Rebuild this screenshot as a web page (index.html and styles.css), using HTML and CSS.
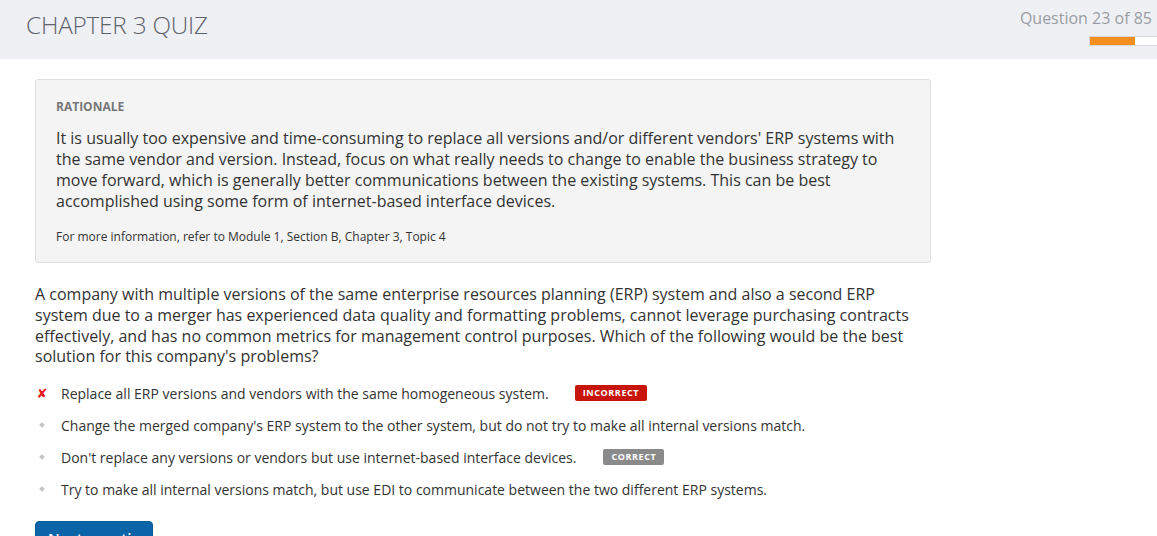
FILE: index.html
```html
<!DOCTYPE html>
<html>
<head>
<meta charset="utf-8">
<link rel="stylesheet" href="styles.css">
</head>
<body>
<header class="topbar">
  <h1 class="title">CHAPTER 3 QUIZ</h1>
  <div class="progress-wrap">
    <div class="qcount">Question 23 of 85</div>
    <div class="progress"><div class="progress-fill" style="width:67%"></div></div>
  </div>
</header>
<main class="content">
  <section class="rationale">
    <div class="rationale-label">RATIONALE</div>
    <p class="rationale-text">It is usually too expensive and time-consuming to replace all versions and/or different vendors' ERP systems with the same vendor and version. Instead, focus on what really needs to change to enable the business strategy to move forward, which is generally better communications between the existing systems. This can be best accomplished using some form of internet-based interface devices.</p>
    <p class="rationale-ref">For more information, refer to Module 1, Section B, Chapter 3, Topic 4</p>
  </section>
  <p class="question">A company with multiple versions of the same enterprise resources planning (ERP) system and also a second ERP system due to a merger has experienced data quality and formatting problems, cannot leverage purchasing contracts effectively, and has no common metrics for management control purposes. Which of the following would be the best solution for this company's problems?</p>
  <ul class="options">
    <li class="option"><span class="mark wrong">✘</span><span class="opt-text">Replace all ERP versions and vendors with the same homogeneous system.</span><span class="badge badge-incorrect">INCORRECT</span></li>
    <li class="option"><span class="mark"><span class="dot"></span></span><span class="opt-text">Change the merged company's ERP system to the other system, but do not try to make all internal versions match.</span></li>
    <li class="option"><span class="mark"><span class="dot"></span></span><span class="opt-text">Don't replace any versions or vendors but use internet-based interface devices.</span><span class="badge badge-correct">CORRECT</span></li>
    <li class="option"><span class="mark"><span class="dot"></span></span><span class="opt-text">Try to make all internal versions match, but use EDI to communicate between the two different ERP systems.</span></li>
  </ul>
  <button class="next-btn">Next question</button>
</main>
</body>
</html>
```
FILE: styles.css
```css
html, body {
  margin: 0;
  padding: 0;
  background: #ffffff;
  font-family: "Open Sans", "Liberation Sans", sans-serif;
  color: #333333;
  overflow: hidden;
  height: 536px;
}
.topbar {
  background: #eff0f4;
  height: 59px;
  display: flex;
  justify-content: space-between;
  align-items: flex-start;
  box-sizing: border-box;
}
.title {
  margin: 0;
  padding: 9px 0 0 26px;
  font-weight: 300;
  font-size: 24.3px;
  line-height: 32px;
  color: #5f636b;
  letter-spacing: -0.2px;
}
.progress-wrap {
  padding: 6px 5px 0 0;
  display: flex;
  flex-direction: column;
  align-items: flex-end;
}
.qcount {
  font-size: 16px;
  line-height: 24px;
  color: #9a9da3;
}
.progress {
  margin-top: 6px;
  margin-right: -5px;
  width: 67px;
  height: 8px;
  background: #ffffff;
  border: 1px solid #d8d8dc;
  border-right: none;
}
.progress-fill {
  height: 100%;
  background: #f48f1f;
}
.content {
  padding: 20px 0 0 35px;
  width: 896px;
}
.rationale {
  background: #f4f4f4;
  border: 1px solid #e1e1e1;
  border-radius: 3px;
  padding: 19px 20px 17px 20px;
}
.rationale-label {
  font-size: 12px;
  font-weight: 700;
  color: #777777;
  line-height: 16px;
}
.rationale-text {
  margin: 13px 0 0 0;
  font-size: 16px;
  line-height: 21px;
  color: #333333;
}
.rationale-ref {
  margin: 17px 0 0 0;
  font-size: 12px;
  line-height: 16px;
  color: #333333;
}
.question {
  margin: 21px 0 0 0;
  font-size: 16px;
  line-height: 20.75px;
  color: #333333;
}
.options {
  list-style: none;
  margin: 10px 0 0 0;
  padding: 0;
}
.option {
  display: flex;
  align-items: center;
  height: 32px;
  font-size: 14px;
  color: #333333;
}
.mark {
  width: 26px;
  margin-left: -6px;
  display: flex;
  justify-content: center;
  align-items: center;
  flex-shrink: 0;
}
.wrong {
  color: #e8161b;
  font-size: 13px;
  font-family: "DejaVu Sans", sans-serif;
}
.dot {
  width: 4px;
  height: 4px;
  background: #c4c4c4;
  transform: rotate(45deg);
}
.opt-text {
  margin-left: 6px;
}
.badge {
  margin-left: 26px;
  font-size: 9px;
  font-weight: 700;
  letter-spacing: 0.6px;
  color: #ffffff;
  border-radius: 2px;
  padding: 0 8px;
  line-height: 16px;
}
.badge-incorrect {
  background: #c8150b;
}
.badge-correct {
  background: #8a8a8a;
  margin-left: 27px;
}
.next-btn {
  margin-top: 16px;
  background: #0b64a8;
  color: #ffffff;
  border: 1px solid #0a5a98;
  border-radius: 4px;
  font-family: "Open Sans", "Liberation Sans", sans-serif;
  font-size: 15px;
  font-weight: 600;
  padding: 6px 12px;
  width: 118px;
  line-height: 20px;
  white-space: nowrap;
}
```
